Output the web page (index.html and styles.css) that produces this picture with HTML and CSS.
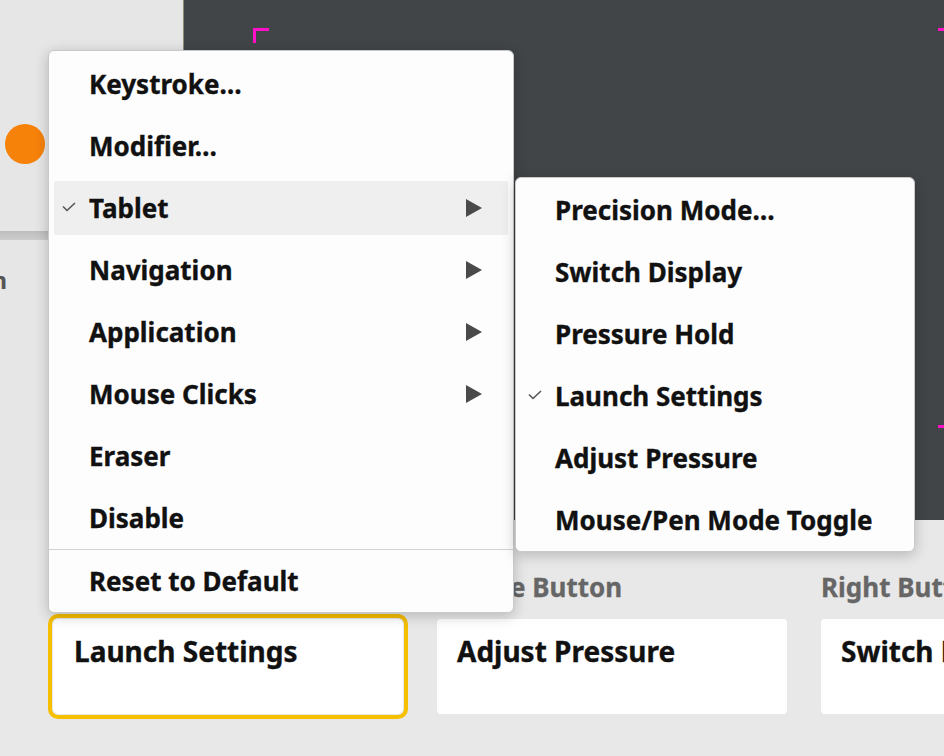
FILE: index.html
```html
<!DOCTYPE html>
<html lang="en">
<head>
<meta charset="utf-8">
<title>Pen Buttons</title>
<link rel="stylesheet" href="styles.css">
</head>
<body>
<div class="app">
  <div class="top">
    <aside class="side">
      <div class="dot"></div>
      <div class="rule"></div>
      <div class="side-label"><span>Position</span></div>
    </aside>
    <section class="canvas">
      <div class="frame">
        <i class="corner tl"></i>
        <i class="corner tr"></i>
        <i class="corner br"></i>
      </div>
    </section>
  </div>
  <div class="buttons">
    <div class="btn-col">
      <div class="btn-label">Left Button</div>
      <div class="card selected">Launch Settings</div>
    </div>
    <div class="btn-col">
      <div class="btn-label">Middle Button</div>
      <div class="card">Adjust Pressure</div>
    </div>
    <div class="btn-col">
      <div class="btn-label">Right Button</div>
      <div class="card">Switch Display</div>
    </div>
  </div>
</div>

<div class="menu main-menu">
  <div class="menu-list">
    <div class="item"><span class="check"></span><span class="label">Keystroke…</span></div>
    <div class="item"><span class="check"></span><span class="label">Modifier…</span></div>
    <div class="item active"><span class="check"><svg width="14" height="10" viewBox="0 0 14 10"><path d="M1 4.5 L5 8.5 L13 1" fill="none" stroke="#555" stroke-width="1.6"/></svg></span><span class="label">Tablet</span><svg class="arrow" width="16" height="18" viewBox="0 0 16 18"><polygon points="0,0 16,9 0,18" fill="#4a4a4a"/></svg></div>
    <div class="item"><span class="check"></span><span class="label">Navigation</span><svg class="arrow" width="16" height="18" viewBox="0 0 16 18"><polygon points="0,0 16,9 0,18" fill="#4a4a4a"/></svg></div>
    <div class="item"><span class="check"></span><span class="label">Application</span><svg class="arrow" width="16" height="18" viewBox="0 0 16 18"><polygon points="0,0 16,9 0,18" fill="#4a4a4a"/></svg></div>
    <div class="item"><span class="check"></span><span class="label">Mouse Clicks</span><svg class="arrow" width="16" height="18" viewBox="0 0 16 18"><polygon points="0,0 16,9 0,18" fill="#4a4a4a"/></svg></div>
    <div class="item"><span class="check"></span><span class="label">Eraser</span></div>
    <div class="item"><span class="check"></span><span class="label">Disable</span></div>
  </div>
  <div class="sep"></div>
  <div class="menu-list last">
    <div class="item"><span class="check"></span><span class="label">Reset to Default</span></div>
  </div>
</div>

<div class="menu sub-menu">
  <div class="menu-list">
    <div class="item"><span class="check"></span><span class="label">Precision Mode…</span></div>
    <div class="item"><span class="check"></span><span class="label">Switch Display</span></div>
    <div class="item"><span class="check"></span><span class="label">Pressure Hold</span></div>
    <div class="item"><span class="check"><svg width="14" height="10" viewBox="0 0 14 10"><path d="M1 4.5 L5 8.5 L13 1" fill="none" stroke="#555" stroke-width="1.6"/></svg></span><span class="label">Launch Settings</span></div>
    <div class="item"><span class="check"></span><span class="label">Adjust Pressure</span></div>
    <div class="item"><span class="check"></span><span class="label">Mouse/Pen Mode Toggle</span></div>
  </div>
</div>
</body>
</html>
```

FILE: styles.css
```css
* { box-sizing: border-box; }

html, body {
  margin: 0;
  padding: 0;
  width: 944px;
  height: 756px;
  overflow: hidden;
  background: #e8e8e8;
  font-family: "Noto Sans", "Open Sans", sans-serif;
  color: #111;
}

.app {
  width: 944px;
  height: 756px;
  display: flex;
  flex-direction: column;
}

.top {
  display: flex;
  height: 520px;
  flex: none;
}

.side {
  width: 183px;
  flex: none;
  background: #e6e6e6;
  display: flex;
  flex-direction: column;
}

.dot {
  width: 40px;
  height: 40px;
  border-radius: 50%;
  background: #f6820a;
  margin: 124px 0 0 5px;
}

.rule {
  height: 9px;
  margin-top: 67px;
  background: linear-gradient(#bdbdbd, #cdcdcd);
}

.side-label {
  width: 7px;
  display: flex;
  justify-content: flex-end;
  margin-top: 24px;
  font-size: 24px;
  font-weight: 700;
  line-height: 32px;
  color: #555;
  white-space: nowrap;
}

.canvas {
  flex: 1;
  position: relative;
  overflow: hidden;
  background: #424548;
  border-left: 1px solid #8f8c76;
}

.frame {
  position: absolute;
  left: 69px;
  top: 28px;
  width: 701px;
  height: 400px;
}

.corner {
  position: absolute;
  width: 16px;
  height: 15px;
  border: 0 solid #ff0fc8;
}
.corner.tl { left: 0; top: 0; border-top-width: 3px; border-left-width: 3px; }
.corner.tr { right: 0; top: 0; border-top-width: 3px; border-right-width: 3px; }
.corner.br { right: 0; bottom: 0; border-bottom-width: 3px; border-right-width: 3px; }

.buttons {
  display: flex;
  gap: 34px;
  padding: 51px 0 0 53px;
}

.btn-col {
  width: 350px;
  flex: none;
  display: flex;
  flex-direction: column;
}

.btn-label {
  font-size: 26px;
  font-weight: 700;
  line-height: 32px;
  color: #666;
  white-space: nowrap;
  -webkit-text-stroke: 0.3px #666;
}

.card {
  margin-top: 16px;
  height: 95px;
  background: #fff;
  border-radius: 4px;
  padding: 14px 20px 0 20px;
  font-size: 28px;
  font-weight: 700;
  line-height: 36px;
  color: #111;
  white-space: nowrap;
  -webkit-text-stroke: 0.35px #111;
}

.card.selected {
  outline: 4px solid #f6bf00;
  outline-offset: 1px;
  border-radius: 5px;
  padding-left: 21px;
}

/* menus */
.menu {
  position: absolute;
  background: #fdfdfd;
  border: 1px solid #c9c9c9;
  border-radius: 6px;
  box-shadow: 0 3px 14px rgba(0, 0, 0, 0.22);
}

.main-menu {
  left: 48px;
  top: 50px;
  width: 466px;
  padding-top: 2px;
}

.sub-menu {
  left: 515px;
  top: 177px;
  width: 400px;
  padding-top: 1px;
}

.menu-list {
  display: flex;
  flex-direction: column;
}

.item {
  height: 54px;
  margin: 4px 5px;
  padding: 0 26px 0 8px;
  display: flex;
  align-items: center;
  border-radius: 2px;
  font-size: 26px;
  font-weight: 700;
  line-height: 54px;
  color: #111;
  white-space: nowrap;
  -webkit-text-stroke: 0.35px #111;
}

.main-menu .item { padding-left: 8px; }
.sub-menu .item { padding-left: 7px; }

.item.active {
  background: #efefef;
}

.check {
  width: 27px;
  flex: none;
  display: flex;
  align-items: center;
  padding-bottom: 2px;
}

.label {
  flex: 1;
  padding-top: 1px;
  margin-top: -2px;
}

.arrow {
  flex: none;
  display: block;
}

.sep {
  height: 1px;
  background: #d2d2d2;
}
```
